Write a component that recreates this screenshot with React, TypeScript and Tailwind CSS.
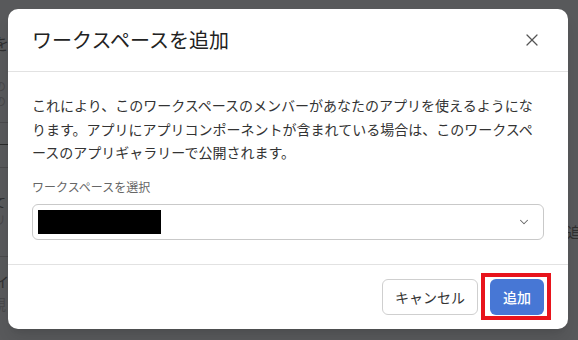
import { X, ChevronDown } from 'lucide-react'

const font = { fontFamily: '"Noto Sans CJK JP", "Noto Sans", sans-serif' }

function BackdropPage() {
  // the page behind the modal, dimmed; only a sliver shows at the edges
  return (
    <div className="flex h-[340px] flex-col text-[#2f2f30]">
      <div className="mt-[34px] -ml-[7px] text-[16px] leading-[18px]">を</div>
      <div className="mt-[28px] -ml-[6px] text-[12px] leading-[12px] text-[#48484a]">の</div>
      <div className="mt-[3px] -ml-[6px] text-[12px] leading-[12px] text-[#48484a]">の</div>
      <div className="mt-[15px] h-px w-[8px] bg-[#4a4a4c]" />
      <div className="mt-[21px] h-px w-[8px] bg-[#2a2a2a]" />
      <div className="mt-[22px] h-px w-[8px] bg-[#4a4a4c]" />
      <div className="mt-[27px] -ml-[7px] text-[13px] leading-[14px]">て</div>
      <div className="mt-[4px] -ml-[6px] text-[12px] leading-[14px] text-[#48484a]">リ</div>
      <div className="mt-[29px] h-px w-[8px] bg-[#4a4a4c]" />
      <div className="mt-[16px] -ml-[5px] text-[14px] leading-[16px]">イ</div>
      <div className="mt-[6px] -ml-[9px] text-[15px] leading-[18px] text-[#48484a]">親</div>
    </div>
  )
}

export default function App() {
  return (
    <div className="relative h-[340px] w-[578px] overflow-hidden bg-[#58595b]" style={font}>
      <BackdropPage />
      <div className="absolute top-[221px] left-[567px] whitespace-nowrap text-[14px] text-[#2f2f30]">追加</div>

      <div className="absolute top-[9px] left-[8px] flex h-[320px] w-[560px] flex-col rounded-[10px] bg-white shadow-lg">
        <div className="flex h-[63px] items-center justify-between border-b border-[#e2e2e2] px-6">
          <h2 className="text-[20px] font-normal text-[#222]">ワークスペースを追加</h2>
          <button className="flex h-6 w-6 items-center justify-center text-[#555]">
            <X size={20} strokeWidth={1.5} />
          </button>
        </div>

        <div className="flex flex-1 flex-col border-b border-[#e2e2e2] px-6 pt-[22px] pb-[24px]">
          <p className="text-[14px] leading-[23.5px] text-[#333]">
            これにより、このワークスペースのメンバーがあなたのアプリを使えるようになります。アプリにアプリコンポーネントが含まれている場合は、このワークスペースのアプリギャラリーで公開されます。
          </p>
          <label className="mt-[13px] text-[12px] leading-[18px] text-[#666]">ワークスペースを選択</label>
          <div className="mt-[8px] flex h-[36px] items-center justify-between rounded-md border border-[#c9c9c9] pr-[12px] pl-[5px]">
            <div className="h-[24px] w-[123px] bg-black" />
            <ChevronDown size={14} strokeWidth={1.8} className="text-[#666]" />
          </div>
        </div>

        <div className="flex h-[64px] items-start justify-end gap-3 px-6 pt-[14px]">
          <button className="h-[36px] rounded-md border border-[#cfcfcf] bg-white px-[12px] text-[14px] text-[#333]">
            キャンセル
          </button>
          <span className="relative">
            <button className="h-[36px] rounded-md bg-[#4777d5] px-[13px] text-[14px] font-medium text-white">
              追加
            </button>
            <span className="pointer-events-none absolute -top-[6px] -right-[7px] -bottom-[5px] -left-[9px] border-4 border-[#e8141c]" />
          </span>
        </div>
      </div>
    </div>
  )
}
